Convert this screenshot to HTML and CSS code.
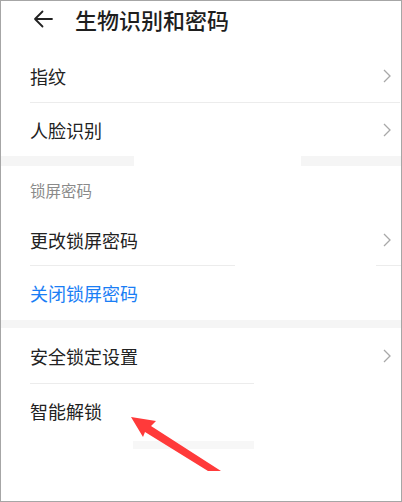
FILE: index.html
```html
<!DOCTYPE html>
<html lang="zh-CN">
<head>
<meta charset="utf-8">
<link rel="stylesheet" href="styles.css">
</head>
<body>
<div class="frame">
  <header class="topbar">
    <svg class="back" width="20" height="18" viewBox="0 0 20 18"><path d="M19 9H2M9.5 1.5L2 9l7.5 7.5" fill="none" stroke="#222" stroke-width="1.8" stroke-linecap="round" stroke-linejoin="round"/></svg>
    <h1 class="title">生物识别和密码</h1>
  </header>
  <section class="group first">
    <div class="row r52"><span class="label">指纹</span><svg class="chev" width="8" height="14" viewBox="0 0 8 14"><path d="M1 1l6 6-6 6" fill="none" stroke="#a8a8a8" stroke-width="1.3"/></svg></div>
    <div class="divider d-full"></div>
    <div class="row r53"><span class="label">人脸识别</span><svg class="chev" width="8" height="14" viewBox="0 0 8 14"><path d="M1 1l6 6-6 6" fill="none" stroke="#a8a8a8" stroke-width="1.3"/></svg></div>
  </section>
  <div class="band band-split"></div>
  <section class="group">
    <div class="subhead">锁屏密码</div>
    <div class="row r51"><span class="label">更改锁屏密码</span><svg class="chev" width="8" height="14" viewBox="0 0 8 14"><path d="M1 1l6 6-6 6" fill="none" stroke="#a8a8a8" stroke-width="1.3"/></svg></div>
    <div class="divider d-gap"></div>
    <div class="row r54"><span class="label blue">关闭锁屏密码</span></div>
  </section>
  <div class="band band-full"></div>
  <section class="group">
    <div class="row r55"><span class="label">安全锁定设置</span><svg class="chev" width="8" height="14" viewBox="0 0 8 14"><path d="M1 1l6 6-6 6" fill="none" stroke="#a8a8a8" stroke-width="1.3"/></svg></div>
    <div class="divider d-short"></div>
    <div class="row r54"><span class="label">智能解锁</span></div>
    <div class="faint"></div>
  </section>
  <svg class="pointer" width="402" height="502" viewBox="0 0 402 502"><polygon points="131,417 156,421 151,426 221,471 208,471 145,432 143,437" fill="#ff3a3a"/></svg>
</div>
</body>
</html>
```

FILE: styles.css
```css
* { box-sizing: border-box; margin: 0; padding: 0; }
html, body { width: 402px; height: 502px; background: #fff; overflow: hidden; }
body { font-family: "Noto Sans CJK SC", "Noto Sans", sans-serif; color: #1e1e1e; }
.frame {
  position: relative;
  width: 402px;
  height: 502px;
  border: 1px solid #a6a6a6;
  background: #fff;
  display: flex;
  flex-direction: column;
}
.topbar {
  height: 35px;
  display: flex;
  align-items: center;
  padding-left: 32px;
  gap: 22px;
}
.back { flex: none; margin-top: 1px; }
.title { font-size: 22px; font-weight: 500; line-height: 1; color: #1e1e1e; }
.group.first { padding-top: 14px; }
.row {
  display: flex;
  align-items: center;
  justify-content: space-between;
  padding-left: 29px;
  padding-right: 10px;
}
.r51 { height: 51px; }
.r52 { height: 52px; }
.r53 { height: 53px; }
.r54 { height: 54px; }
.r55 { height: 55px; }
.label { font-size: 18px; line-height: 1; color: #222; }
.label.blue { color: #1a7ef5; }
.chev { flex: none; }
.divider { height: 1px; margin-left: 29px; }
.d-full { background: #ececec; margin-right: 1px; }
.d-gap { background: linear-gradient(to right, #ececec 0 205px, transparent 205px 346px, #ececec 346px); }
.d-short { background: #ececec; width: 224px; }
.subhead {
  height: 48px;
  display: flex;
  align-items: center;
  padding-left: 29px;
  font-size: 15.5px;
  color: #8a8a8a;
}
.band { height: 10px; }
.band-split { background: linear-gradient(to right, #f5f5f5 0 133px, #fff 133px 300px, #f5f5f5 300px); }
.band-full { height: 8px; background: #f5f5f5; }
.faint { height: 8px; margin-top: 3px; margin-left: 132px; width: 121px; background: #f7f7f7; }
.pointer { position: absolute; left: -1px; top: -1px; pointer-events: none; }
```
